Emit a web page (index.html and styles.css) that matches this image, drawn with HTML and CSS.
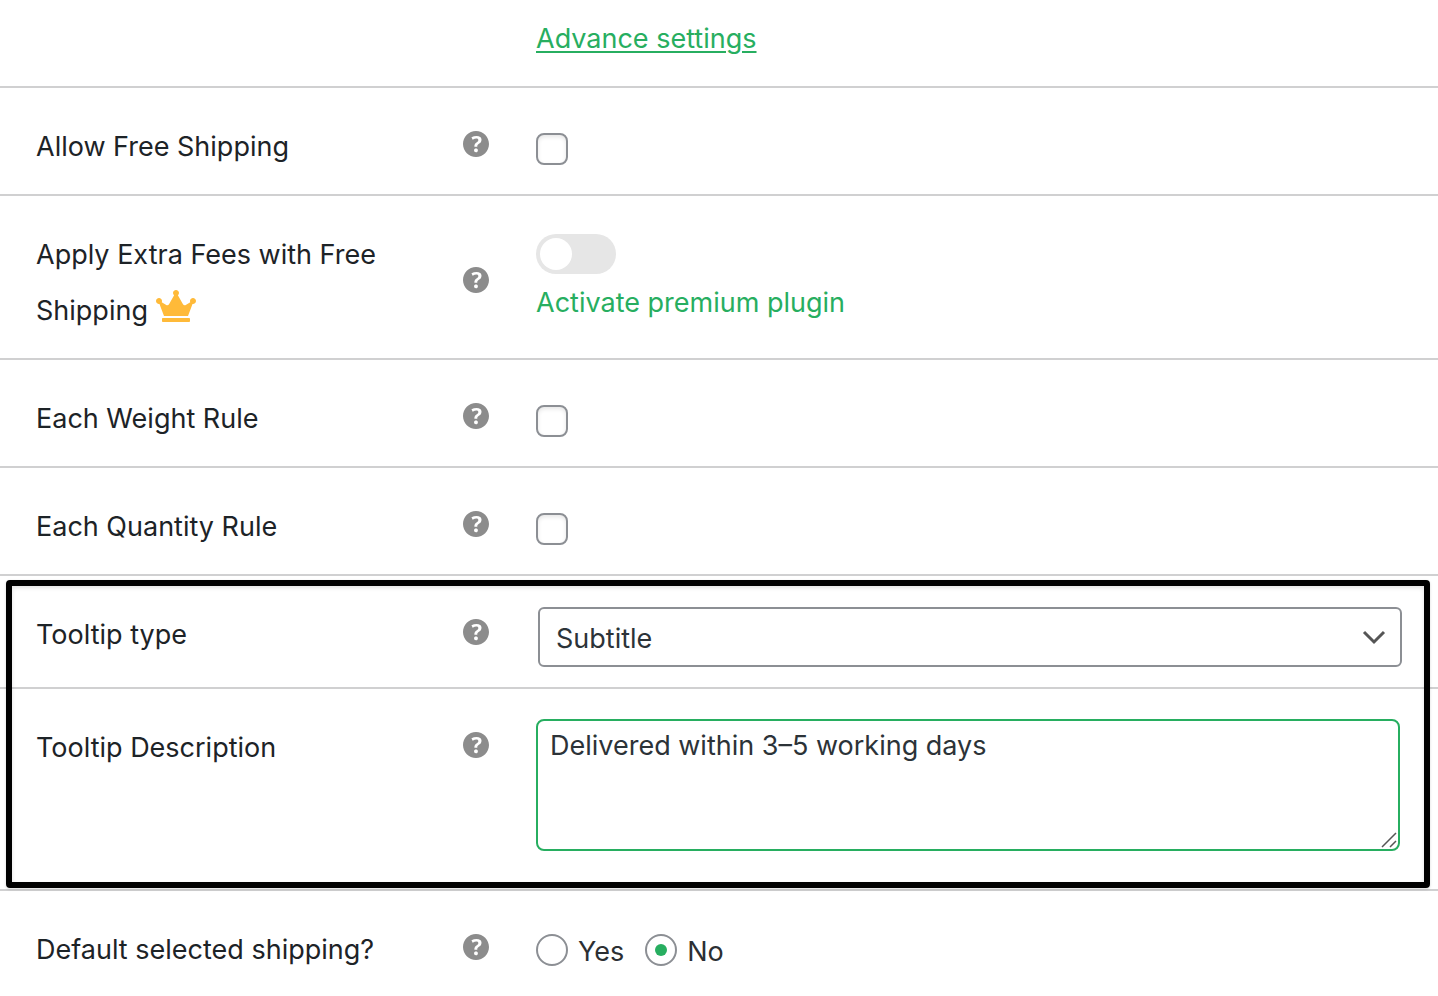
FILE: index.html
```html
<!DOCTYPE html>
<html lang="en">
<head>
<meta charset="utf-8">
<meta name="viewport" content="width=device-width, initial-scale=1">
<title>Shipping method settings</title>
<link rel="stylesheet" href="styles.css">
</head>
<body>
<svg class="defs" aria-hidden="true">
  <symbol id="help" viewBox="3 3 14 14">
    <path d="M17 10c0-3.87-3.14-7-7-7-3.87 0-7 3.13-7 7s3.13 7 7 7c3.86 0 7-3.13 7-7zm-6.3 1.48H9.14v-.43c0-.38.08-.7.24-.98s.46-.57.88-.89c.41-.29.68-.53.81-.71.14-.18.2-.39.2-.62 0-.25-.09-.44-.28-.58-.19-.13-.45-.19-.79-.19-.58 0-1.25.19-2 .57l-.64-1.28c.87-.49 1.8-.74 2.77-.74.81 0 1.45.2 1.92.58.48.39.71.91.71 1.55 0 .43-.09.8-.29 1.11-.19.32-.57.67-1.11 1.06-.38.28-.61.49-.71.63-.1.15-.15.34-.15.57v.35zm-1.47 2.74c-.18-.17-.27-.42-.27-.73 0-.33.08-.58.26-.75s.43-.25.77-.25c.32 0 .57.09.75.26s.27.42.27.74c0 .3-.09.55-.27.72-.18.18-.43.27-.75.27-.33 0-.58-.09-.76-.26z"/>
  </symbol>
</svg>
<form class="settings">
  <div class="row row-link">
    <a class="link link-underlined" href="#advance">Advance settings</a>
  </div>

  <div class="row">
    <div class="name">
      <label for="free">Allow Free Shipping</label>
      <svg class="help"><use href="#help"/></svg>
    </div>
    <div class="control control-check"><input class="check" type="checkbox" id="free"></div>
  </div>

  <div class="row">
    <div class="name">
      <label for="extra">Apply Extra Fees with Free Shipping
        <svg class="crown" viewBox="0 0 640 512"><path d="M528 448H112c-8.8 0-16 7.2-16 16v32c0 8.8 7.2 16 16 16h416c8.8 0 16-7.2 16-16v-32c0-8.8-7.2-16-16-16zm64-320c-26.5 0-48 21.5-48 48 0 7.1 1.6 13.7 4.4 19.8L476 239.2c-15.4 9.2-35.3 4-44.2-11.6L350.3 85C361 76.2 368 63 368 48c0-26.5-21.5-48-48-48s-48 21.5-48 48c0 15 7 28.2 17.7 37l-81.5 142.6c-8.9 15.6-28.9 20.8-44.2 11.6l-72.3-43.4c2.7-6 4.4-12.7 4.4-19.8 0-26.5-21.5-48-48-48S0 149.5 0 176s21.5 48 48 48c2.6 0 5.2-.4 7.7-.8L128 416h384l72.3-192.8c2.5.4 5.1.8 7.7.8 26.5 0 48-21.5 48-48s-21.5-48-48-48z"/></svg>
      </label>
      <svg class="help"><use href="#help"/></svg>
    </div>
    <div class="control control-toggle">
      <input class="toggle" type="checkbox" id="extra">
      <a class="link" href="#premium">Activate premium plugin</a>
    </div>
  </div>

  <div class="row">
    <div class="name">
      <label for="weight">Each Weight Rule</label>
      <svg class="help"><use href="#help"/></svg>
    </div>
    <div class="control control-check"><input class="check" type="checkbox" id="weight"></div>
  </div>

  <div class="row">
    <div class="name">
      <label for="quantity">Each Quantity Rule</label>
      <svg class="help"><use href="#help"/></svg>
    </div>
    <div class="control control-check"><input class="check" type="checkbox" id="quantity"></div>
  </div>

  <div class="group">
    <div class="row">
      <div class="name">
        <label for="type">Tooltip type</label>
        <svg class="help"><use href="#help"/></svg>
      </div>
      <div class="control control-select">
        <select class="select" id="type"><option>Subtitle</option></select>
        <svg class="chevron" viewBox="0 0 24 16"><path d="M2 3l10 10L22 3"/></svg>
      </div>
    </div>
    <div class="row row-text">
      <div class="name">
        <label for="description">Tooltip Description</label>
        <svg class="help"><use href="#help"/></svg>
      </div>
      <div class="control">
        <textarea class="textarea" id="description">Delivered within 3–5 working days</textarea>
        <svg class="grip" viewBox="0 0 16 16"><path d="M1 15L15 1M9 15l6-6"/></svg>
      </div>
    </div>
    <div class="highlight"></div>
  </div>

  <div class="row">
    <div class="name">
      <span id="default-label">Default selected shipping?</span>
      <svg class="help"><use href="#help"/></svg>
    </div>
    <div class="control control-radio" role="radiogroup" aria-labelledby="default-label">
      <label class="choice"><input class="radio" type="radio" name="default">Yes</label>
      <label class="choice"><input class="radio" type="radio" name="default" checked>No</label>
    </div>
  </div>
</form>
</body>
</html>
```
FILE: styles.css
```css
* {
  box-sizing: border-box;
}

body {
  margin: 0;
  background: #fff;
  color: #1d2327;
  font-family: Inter, "Liberation Sans", sans-serif;
  font-size: 27px;
  line-height: 56px;
}

.defs {
  display: none;
}

.row {
  display: grid;
  grid-template-columns: 453px 1fr;
  column-gap: 47px;
  align-items: start;
  padding: 30px 38px 19px 36px;
  border-bottom: 2px solid #d0d0d1;
}

.settings > .row:last-child {
  border-bottom: 0;
}

.row-link {
  padding-top: 11px;
}

.row-text {
  padding-bottom: 38px;
}

.name {
  display: flex;
  align-items: center;
  justify-content: space-between;
  gap: 24px;
  padding-top: 1px;
}

.help {
  flex: none;
  width: 26px;
  height: 26px;
  margin-bottom: 6px;
  fill: #8c8c8c;
}

.crown {
  width: 40px;
  height: 32px;
  vertical-align: -2px;
  fill: #ffba39;
}

.link {
  color: #27ae60;
  text-decoration: none;
}

.link-underlined {
  grid-column: 2;
  text-decoration: underline;
  text-decoration-thickness: 2px;
  text-underline-offset: 3px;
}

.control {
  position: relative;
  display: flex;
}

.control-check {
  padding-top: 15px;
}

.control-toggle {
  flex-direction: column;
  align-items: flex-start;
  gap: 1px;
  padding-top: 8px;
}

.control-select {
  margin: 1px -2px 1px 2px;
}

.control-radio {
  gap: 21px;
  padding-top: 3px;
}

.check,
.radio,
.toggle {
  appearance: none;
  flex: none;
  margin: 0;
}

.check,
.radio {
  width: 32px;
  height: 32px;
  border: 2px solid #8c8f94;
  background: #fff;
}

.check {
  border-radius: 8px;
  box-shadow: inset 0 2px 4px rgba(0, 0, 0, 0.1);
}

.radio {
  display: grid;
  place-content: center;
  margin-bottom: 4px;
  border-radius: 50%;
}

.radio:checked::before {
  content: "";
  width: 12px;
  height: 12px;
  border-radius: 50%;
  background: #27ae60;
}

.choice {
  display: flex;
  align-items: center;
  gap: 10px;
  color: #2c2f33;
}

.toggle {
  width: 80px;
  height: 40px;
  padding: 4px;
  border-radius: 20px;
  background: #e6e6e6;
}

.toggle::before {
  content: "";
  display: block;
  width: 32px;
  height: 32px;
  border-radius: 50%;
  background: #fff;
}

.toggle:checked {
  background: #27ae60;
}

.toggle:checked::before {
  margin-left: auto;
}

.select,
.textarea {
  width: 100%;
  margin: 0;
  background: #fff;
  color: #2c3338;
  font: inherit;
}

.select {
  appearance: none;
  height: 60px;
  padding: 2px 48px 0 16px;
  border: 2px solid #8c8f94;
  border-radius: 6px;
}

.chevron {
  position: absolute;
  top: 22px;
  right: 16px;
  width: 24px;
  height: 16px;
  fill: none;
  stroke: #555;
  stroke-width: 3;
  pointer-events: none;
}

.textarea {
  height: 132px;
  padding: 5px 12px;
  border: 2px solid #27ae60;
  border-radius: 8px;
  line-height: 40px;
  resize: none;
}

.grip {
  position: absolute;
  right: 3px;
  bottom: 3px;
  width: 16px;
  height: 16px;
  fill: none;
  stroke: #555;
  stroke-width: 1.5;
  pointer-events: none;
}

.group {
  position: relative;
}

.highlight {
  position: absolute;
  inset: 4px 8px 3px 6px;
  border: 6px solid #000;
  border-radius: 4px;
  box-shadow: 0 1px 3px rgba(0, 0, 0, 0.15), inset 0 2px 4px rgba(0, 0, 0, 0.12);
  pointer-events: none;
}
```
